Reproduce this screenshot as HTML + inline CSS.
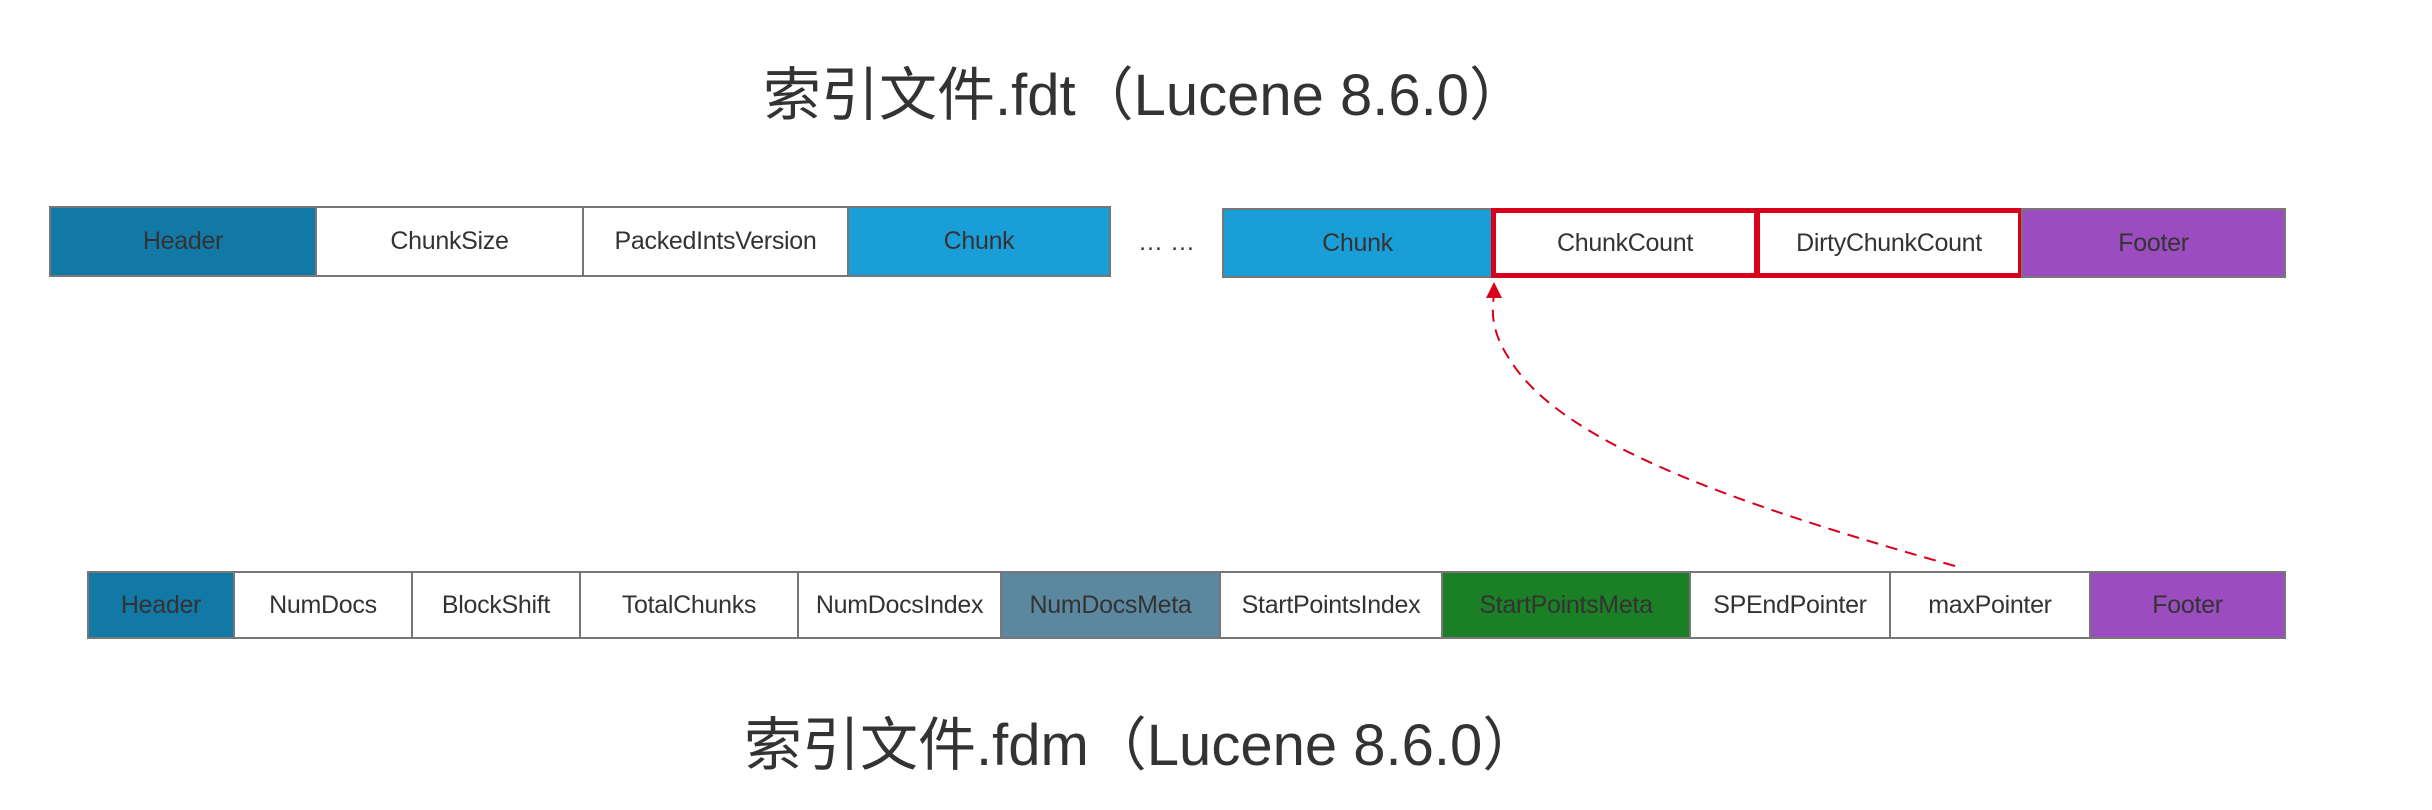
<!DOCTYPE html>
<html><head><meta charset="utf-8"><style>
html,body{margin:0;padding:0;background:#fff;width:2432px;height:810px;overflow:hidden;position:relative;font-family:"Liberation Sans","Noto Sans CJK SC",sans-serif;color:#333}
.t{position:absolute;font-size:58px;white-space:nowrap;line-height:1}
.b{position:absolute;box-sizing:border-box;border:2px solid #777;display:flex;align-items:center;justify-content:center;font-size:25px;color:#333;white-space:nowrap;letter-spacing:-0.3px}
.r{border:5px solid #d9001b}
</style></head><body>
<div class="t" style="left:763px;top:67px">索引文件.fdt（Lucene 8.6.0）</div>
<div class="t" style="left:744px;top:717px">索引文件.fdm（Lucene 8.6.0）</div>

<div class="b" style="left:49px;top:206px;width:268px;height:71px;background:#1278a6">Header</div>
<div class="b" style="left:315px;top:206px;width:269px;height:71px;background:#fff">ChunkSize</div>
<div class="b" style="left:582px;top:206px;width:267px;height:71px;background:#fff">PackedIntsVersion</div>
<div class="b" style="left:847px;top:206px;width:264px;height:71px;background:#1a9ed8">Chunk</div>
<div style="position:absolute;left:1138px;top:228px;font-size:25px;">… …</div>
<div class="b" style="left:1222px;top:208px;width:271px;height:70px;background:#1a9ed8">Chunk</div>
<div class="b r" style="left:1491px;top:208px;width:268px;height:70px;background:#fff">ChunkCount</div>
<div class="b r" style="left:1755px;top:208px;width:268px;height:70px;background:#fff">DirtyChunkCount</div>
<div class="b" style="left:2021px;top:208px;width:265px;height:70px;background:#9b4dbf">Footer</div>

<div class="b" style="left:87px;top:571px;width:148px;height:68px;background:#1278a6">Header</div>
<div class="b" style="left:233px;top:571px;width:180px;height:68px;background:#fff">NumDocs</div>
<div class="b" style="left:411px;top:571px;width:170px;height:68px;background:#fff">BlockShift</div>
<div class="b" style="left:579px;top:571px;width:220px;height:68px;background:#fff">TotalChunks</div>
<div class="b" style="left:797px;top:571px;width:205px;height:68px;background:#fff">NumDocsIndex</div>
<div class="b" style="left:1000px;top:571px;width:221px;height:68px;background:#5b889e">NumDocsMeta</div>
<div class="b" style="left:1219px;top:571px;width:224px;height:68px;background:#fff">StartPointsIndex</div>
<div class="b" style="left:1441px;top:571px;width:250px;height:68px;background:#1b7f25">StartPointsMeta</div>
<div class="b" style="left:1689px;top:571px;width:202px;height:68px;background:#fff">SPEndPointer</div>
<div class="b" style="left:1889px;top:571px;width:202px;height:68px;background:#fff">maxPointer</div>
<div class="b" style="left:2089px;top:571px;width:197px;height:68px;background:#9b4dbf">Footer</div>

<svg style="position:absolute;left:0;top:0" width="2432" height="810">
<path d="M1955 566 C1720 500 1560 440 1510 360 C1490 330 1492 310 1494 295" fill="none" stroke="#d9001b" stroke-width="2" stroke-dasharray="12,8"/>
<polygon points="1494,282 1486,298 1502,298" fill="#d9001b"/>
</svg>
</body></html>
